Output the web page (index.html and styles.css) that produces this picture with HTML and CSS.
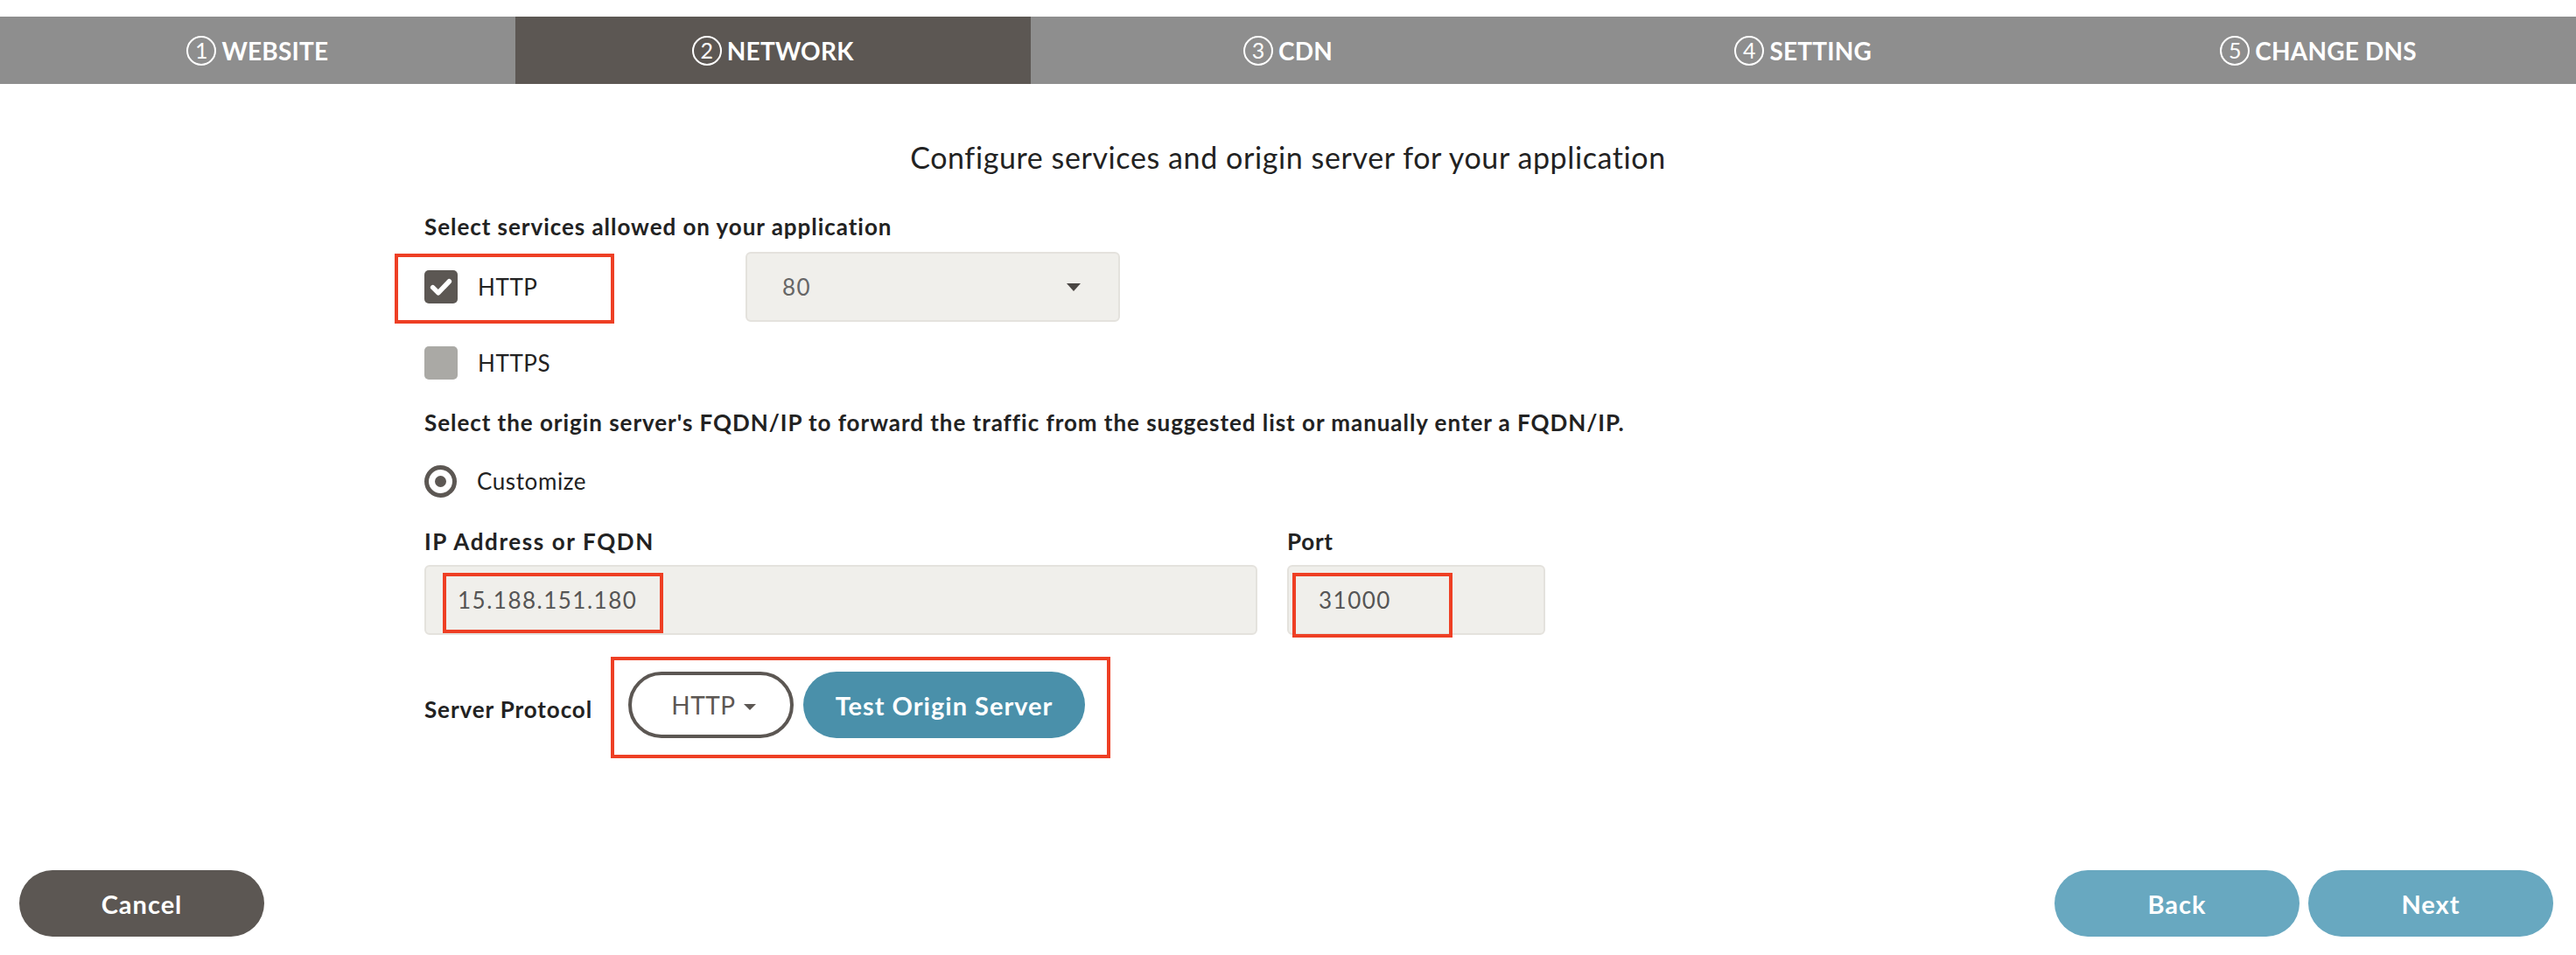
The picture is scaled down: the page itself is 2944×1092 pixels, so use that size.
FILE: index.html
```html
<!DOCTYPE html>
<html lang="en">
<head>
<meta charset="utf-8">
<title>Network</title>
<link rel="stylesheet" href="styles.css">
</head>
<body>
<nav class="steps">
  <div class="step"><span class="num">1</span><span>WEBSITE</span></div>
  <div class="step active"><span class="num">2</span><span>NETWORK</span></div>
  <div class="step"><span class="num">3</span><span>CDN</span></div>
  <div class="step"><span class="num">4</span><span>SETTING</span></div>
  <div class="step"><span class="num">5</span><span>CHANGE DNS</span></div>
</nav>

<main class="main">
  <h1 class="title">Configure services and origin server for your application</h1>

  <p class="section-label">Select services allowed on your application</p>

  <div class="service-row">
    <label class="option hl hl-http">
      <span class="checkbox checked">
        <svg viewBox="0 0 24 24" width="30" height="30"><path d="M4.5 12.5 L9.5 17.5 L19.5 7" fill="none" stroke="#fff" stroke-width="4.4" stroke-linecap="round" stroke-linejoin="round"/></svg>
      </span>
      <span class="option-text">HTTP</span>
    </label>
    <div class="select">
      <span class="select-value">80</span>
      <span class="caret"></span>
    </div>
  </div>

  <div class="service-row short">
    <label class="option">
      <span class="checkbox unchecked"></span>
      <span class="option-text">HTTPS</span>
    </label>
  </div>

  <p class="section-label origin-label">Select the origin server's FQDN/IP to forward the traffic from the suggested list or manually enter a FQDN/IP.</p>

  <div class="radio-row">
    <span class="radio"><span class="radio-dot"></span></span>
    <span class="option-text">Customize</span>
  </div>

  <div class="fields">
    <span class="field-label wide">IP Address or FQDN</span>
    <span class="field-label">Port</span>
    <div class="input input-ip"><span class="input-value hl hl-ip">15.188.151.180</span></div>
    <div class="input input-port"><span class="input-value hl hl-port">31000</span></div>
  </div>

  <div class="protocol-row">
    <span class="protocol-label">Server Protocol</span>
    <div class="protocol-group hl hl-group">
      <button class="pill-outline" type="button">HTTP<span class="caret small"></span></button>
      <button class="pill-blue" type="button">Test Origin Server</button>
    </div>
  </div>
</main>

<footer class="footer">
  <button class="btn btn-dark" type="button">Cancel</button>
  <div class="footer-right">
    <button class="btn btn-light" type="button">Back</button>
    <button class="btn btn-light" type="button">Next</button>
  </div>
</footer>
</body>
</html>
```

FILE: styles.css
```css
* { box-sizing: border-box; }

body {
  margin: 0;
  font-family: Lato, "Noto Sans", "Liberation Sans", sans-serif;
  color: #222;
  background: #fff;
}

.steps {
  display: flex;
  margin-top: 19px;
  height: 77px;
  background: #8e8e8e;
}

.step {
  flex: 1;
  display: flex;
  align-items: center;
  justify-content: center;
  gap: 6px;
  color: #fff;
  font-size: 28px;
  font-weight: 700;
  letter-spacing: 0.2px;
}

.step.active { background: #5c5753; }

.num {
  display: inline-flex;
  align-items: center;
  justify-content: center;
  width: 34px;
  height: 34px;
  border: 2px solid #fff;
  border-radius: 50%;
  font-size: 25px;
  font-weight: 400;
  line-height: 1;
}

.main {
  width: 1974px;
  margin: 0 auto;
}

.title {
  margin: 64px 0 0;
  height: 40px;
  line-height: 40px;
  text-align: center;
  font-size: 34px;
  font-weight: 400;
  letter-spacing: 0.6px;
  color: #222;
}

.section-label {
  margin: 41px 0 0;
  line-height: 36px;
  font-size: 26px;
  font-weight: 700;
  letter-spacing: 0.95px;
  color: #222;
}

.service-row {
  display: flex;
  align-items: center;
  height: 80px;
  margin-top: 11px;
}

.service-row.short {
  height: 60px;
  margin-top: 17px;
}

.option {
  display: flex;
  align-items: center;
  gap: 23px;
  width: 367px;
}

.checkbox {
  display: flex;
  align-items: center;
  justify-content: center;
  width: 38px;
  height: 38px;
  border-radius: 5px;
}

.checkbox.checked { background: #5c5753; }
.checkbox.unchecked { background: #aaa9a5; }

.option-text {
  font-size: 26px;
  letter-spacing: 0.6px;
  color: #222;
}

.select {
  display: flex;
  align-items: center;
  justify-content: space-between;
  width: 428px;
  height: 80px;
  padding: 0 43px 0 40px;
  background: #f0efeb;
  border: 2px solid #e4e2dd;
  border-radius: 6px;
}

.select-value {
  font-size: 26px;
  letter-spacing: 1.5px;
  color: #666;
}

.caret {
  width: 0;
  height: 0;
  border-left: 8px solid transparent;
  border-right: 8px solid transparent;
  border-top: 9px solid #4a4643;
}

.caret.small {
  border-left-width: 7px;
  border-right-width: 7px;
  border-top-width: 7px;
  border-top-color: #5c5753;
  margin-left: 9px;
  margin-top: 4px;
}

.origin-label { margin-top: 20px; }

.radio-row {
  display: flex;
  align-items: center;
  gap: 23px;
  height: 40px;
  margin-top: 29px;
}

.radio {
  display: flex;
  align-items: center;
  justify-content: center;
  width: 37px;
  height: 37px;
  border: 5px solid #5c5753;
  border-radius: 50%;
}

.radio-dot {
  width: 13px;
  height: 13px;
  border-radius: 50%;
  background: #5c5753;
}

.fields {
  display: grid;
  grid-template-columns: 952px 295px;
  column-gap: 34px;
  row-gap: 9px;
  margin-top: 31px;
}

.field-label {
  line-height: 36px;
  font-size: 26px;
  font-weight: 700;
  letter-spacing: 0.75px;
  color: #222;
}

.field-label.wide { letter-spacing: 1.6px; }

.input {
  display: flex;
  align-items: center;
  height: 80px;
  background: #f0efeb;
  border: 2px solid #e4e2dd;
  border-radius: 6px;
}

.input-ip { padding-left: 36px; }
.input-port { padding-left: 34px; }

.input-value {
  font-size: 26px;
  letter-spacing: 1.5px;
  color: #555;
}

.protocol-row {
  display: flex;
  align-items: center;
  height: 76px;
  margin-top: 42px;
}

.protocol-label {
  width: 233px;
  font-size: 26px;
  font-weight: 700;
  letter-spacing: 0.9px;
  color: #222;
  margin-top: 10px;
}

.protocol-group {
  display: flex;
  gap: 11px;
}

.pill-outline {
  display: flex;
  align-items: center;
  justify-content: center;
  width: 189px;
  height: 76px;
  border: 4px solid #5c5753;
  border-radius: 38px;
  background: #fff;
  color: #5c5753;
  font-family: inherit;
  font-size: 28px;
  font-weight: 400;
  letter-spacing: 0.5px;
  padding: 0 0 0 6px;
}

.pill-blue {
  width: 322px;
  height: 76px;
  border: none;
  border-radius: 38px;
  background: #4a90aa;
  color: #fff;
  font-family: inherit;
  font-size: 29px;
  font-weight: 700;
  letter-spacing: 1px;
}

/* red annotation frames drawn over content */
.hl { position: relative; }
.hl::after {
  content: "";
  position: absolute;
  border: 4px solid #ee3f24;
  pointer-events: none;
}
.hl-http::after { left: -34px; top: calc(50% - 38px); width: 243px; height: 72px; }
.hl-ip::after { left: -17px; top: calc(50% - 31px); width: 244px; height: 61px; }
.hl-port::after { left: -30px; top: calc(50% - 31px); width: 175px; height: 66px; }
.hl-group::after { left: -20px; top: -17px; right: -29px; bottom: -23px; }

.footer {
  display: flex;
  justify-content: space-between;
  align-items: center;
  margin-top: 151px;
  padding: 0 26px 0 22px;
}

.footer-right {
  display: flex;
  gap: 10px;
}

.btn {
  width: 280px;
  height: 76px;
  border: none;
  border-radius: 38px;
  color: #fff;
  font-family: inherit;
  font-size: 29px;
  font-weight: 700;
  letter-spacing: 1px;
}

.btn-dark { background: #5c5753; }
.btn-light { background: #68a8c0; }
```
